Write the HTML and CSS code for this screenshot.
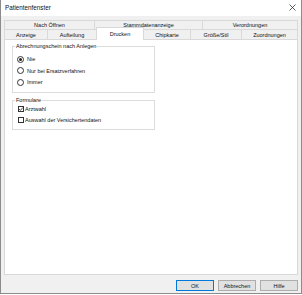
FILE: index.html
```html
<!DOCTYPE html>
<html lang="de">
  <head>
    <meta charset="UTF-8" />
    <title>Patientenfenster</title>
    <link rel="stylesheet" href="styles.css">
  </head>
  <body>
    <div class="window">
      <div class="titlebar">
        <span class="title">Patientenfenster</span>
        <svg class="close" width="7" height="7" viewBox="0 0 7 7">
          <path d="M0.5 0.5 L6.5 6.5 M6.5 0.5 L0.5 6.5" stroke="#333" stroke-width="0.8" />
        </svg>
      </div>
      <div class="content">
        <div class="tabs">
          <div class="tab-row">
            <div class="tab w-91">Nach Öffnen</div>
            <div class="tab w-108">Stammdatenanzeige</div>
            <div class="tab grow">Verordnungen</div>
          </div>
          <div class="tab-row">
            <div class="tab w-44">Anzeige</div>
            <div class="tab w-49">Aufteilung</div>
            <div class="tab w-47 active">Drucken</div>
            <div class="tab w-47">Chipkarte</div>
            <div class="tab w-51">Größe/Stil</div>
            <div class="tab grow">Zuordnungen</div>
          </div>
        </div>
        <div class="panel">
          <fieldset class="group first">
            <legend>Abrechnungschein nach Anlegen</legend>
            <div class="option"><span class="radio checked"></span>Nie</div>
            <div class="option"><span class="radio"></span>Nur bei Ersatzverfahren</div>
            <div class="option"><span class="radio"></span>Immer</div>
          </fieldset>
          <fieldset class="group second">
            <legend>Formulare</legend>
            <div class="option check-row">
              <span class="checkbox">
                <svg width="6" height="6" viewBox="0 0 6 6">
                  <path d="M1 3 L2.4 4.4 L5 1.4" fill="none" stroke="#222" stroke-width="0.8" />
                </svg>
              </span>Arztwahl
            </div>
            <div class="option check-row"><span class="checkbox"></span>Auswahl der Versichertendaten</div>
          </fieldset>
        </div>
        <div class="buttons">
          <button class="btn default">OK</button>
          <button class="btn">Abbrechen</button>
          <button class="btn">Hilfe</button>
        </div>
      </div>
    </div>
  </body>
</html>
```

FILE: styles.css
```css
body {
  margin: 0;
  font-family: "Liberation Sans", Arial, sans-serif;
  font-size: 5.5px;
  color: #111;
  background-color: #fff;
}
.window {
  box-sizing: border-box;
  width: 302px;
  height: 294px;
  border: 1px solid #8c8c8c;
  border-top: none;
  background-color: #f0f0f0;
}
.titlebar {
  display: flex;
  align-items: center;
  justify-content: space-between;
  height: 16px;
  padding: 0 5px 2px 4px;
  box-sizing: border-box;
  background-color: #fff;
}
.title {
  font-size: 6.3px;
}
.close {
  display: block;
}
.content {
  padding: 4px 3px 0 3px;
}

/* tabs */
.tab-row {
  display: flex;
}
.tab-row:first-child {
  height: 9px;
}
.tab-row:last-child {
  height: 10px;
}
.tab {
  box-sizing: border-box;
  display: flex;
  align-items: center;
  justify-content: center;
  height: 100%;
  border-top: 1px solid #d9d9d9;
  border-right: 1px solid #d9d9d9;
  background-color: #f0f0f0;
  white-space: nowrap;
}
.tab:first-child {
  border-left: 1px solid #d9d9d9;
}
.w-91 { width: 91px; }
.w-108 { width: 108px; }
.w-44 { width: 44px; }
.w-49 { width: 49px; }
.w-47 { width: 47px; }
.w-51 { width: 51px; }
.grow { flex: 1; }
.tab.active {
  position: relative;
  z-index: 1;
  height: 13px;
  margin-top: -2px;
  margin-left: -1px;
  width: 48px;
  border-left: 1px solid #d9d9d9;
  background-color: #fff;
  padding-bottom: 1px;
}

/* panel */
.panel {
  box-sizing: border-box;
  height: 236px;
  border: 1px solid #d9d9d9;
  background-color: #fff;
  padding: 3px 0 0 7px;
}
.group {
  box-sizing: border-box;
  width: 143px;
  margin: 0;
  padding: 0 0 0 4px;
  border: 1px solid #dcdcdc;
}
.group legend {
  padding: 0 1px;
  margin-left: -2px;
  line-height: 7px;
}
.group.first {
  height: 50px;
  padding-top: 3.5px;
}
.group.second {
  margin-top: 4px;
  height: 33px;
  padding-top: 0;
  padding-left: 5px;
}
.group.second legend {
  margin-left: -3px;
}
.option {
  display: flex;
  align-items: center;
  height: 11.5px;
}
.check-row {
  height: 10.7px;
}
.radio {
  box-sizing: border-box;
  position: relative;
  width: 7px;
  height: 7px;
  margin-right: 3px;
  border: 1px solid #333;
  border-radius: 50%;
}
.radio.checked::after {
  content: "";
  position: absolute;
  left: 1px;
  top: 1px;
  width: 3px;
  height: 3px;
  border-radius: 50%;
  background-color: #222;
}
.checkbox {
  box-sizing: border-box;
  display: flex;
  width: 6px;
  height: 6px;
  margin-right: 1px;
  border: 1px solid #333;
}
.checkbox svg {
  margin: -1px;
}

/* buttons */
.buttons {
  display: flex;
  justify-content: flex-end;
  gap: 4px;
  margin-top: 5px;
}
.btn {
  box-sizing: border-box;
  width: 38px;
  height: 11px;
  padding: 0;
  font-family: inherit;
  font-size: 5.5px;
  color: #111;
  background-color: #e1e1e1;
  border: 1px solid #adadad;
  border-radius: 0;
}
.btn.default {
  border-color: #0078d7;
}
```
